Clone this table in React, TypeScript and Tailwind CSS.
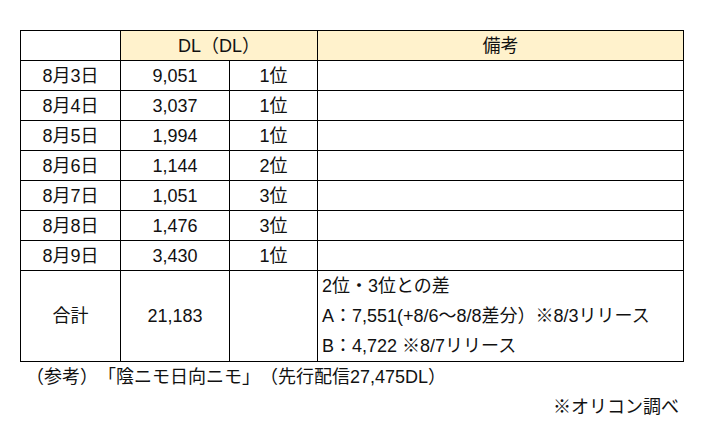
const rows = [
  { date: '8月3日', dl: '9,051', rank: '1位' },
  { date: '8月4日', dl: '3,037', rank: '1位' },
  { date: '8月5日', dl: '1,994', rank: '1位' },
  { date: '8月6日', dl: '1,144', rank: '2位' },
  { date: '8月7日', dl: '1,051', rank: '3位' },
  { date: '8月8日', dl: '1,476', rank: '3位' },
  { date: '8月9日', dl: '3,430', rank: '1位' },
]

export default function App() {
  return (
    <div
      className="min-h-screen bg-white pl-5 pt-[30px] text-[18px] leading-none text-[#111] [text-spacing-trim:space-all]"
      style={{ fontFamily: '"Liberation Sans", "Noto Sans CJK JP", sans-serif' }}
    >
      <div className="grid w-[664px] grid-cols-[99px_108px_87px_365px] gap-px bg-black p-px">
        <div className="h-[29px] bg-white" />
        <div className="col-span-2 flex h-[29px] items-center justify-center bg-[#fff2cc]">DL（DL）</div>
        <div className="flex h-[29px] items-center justify-center bg-[#fff2cc]">備考</div>

        {rows.map((r) => (
          <Row key={r.date} {...r} />
        ))}

        <div className="flex h-[90px] items-center justify-center bg-white">合計</div>
        <div className="flex h-[90px] items-center justify-center bg-white">21,183</div>
        <div className="h-[90px] bg-white" />
        <div className="flex h-[90px] flex-col justify-center gap-[12px] bg-white pl-1">
          <span>2位・3位との差</span>
          <span>A：7,551(+8/6～8/8差分）※8/3リリース</span>
          <span>B：4,722 ※8/7リリース</span>
        </div>
      </div>

      <p className="mt-[6px] pl-[6px]">（参考）「陰ニモ日向ニモ」（先行配信27,475DL）</p>
      <p className="mt-[12px] w-[664px] pr-[5px] text-right">※オリコン調べ</p>
    </div>
  )
}

function Row({ date, dl, rank }: { date: string; dl: string; rank: string }) {
  return (
    <>
      <div className="flex h-[29px] items-center justify-center bg-white">{date}</div>
      <div className="flex h-[29px] items-center justify-center bg-white">{dl}</div>
      <div className="flex h-[29px] items-center justify-center bg-white">{rank}</div>
      <div className="h-[29px] bg-white" />
    </>
  )
}
